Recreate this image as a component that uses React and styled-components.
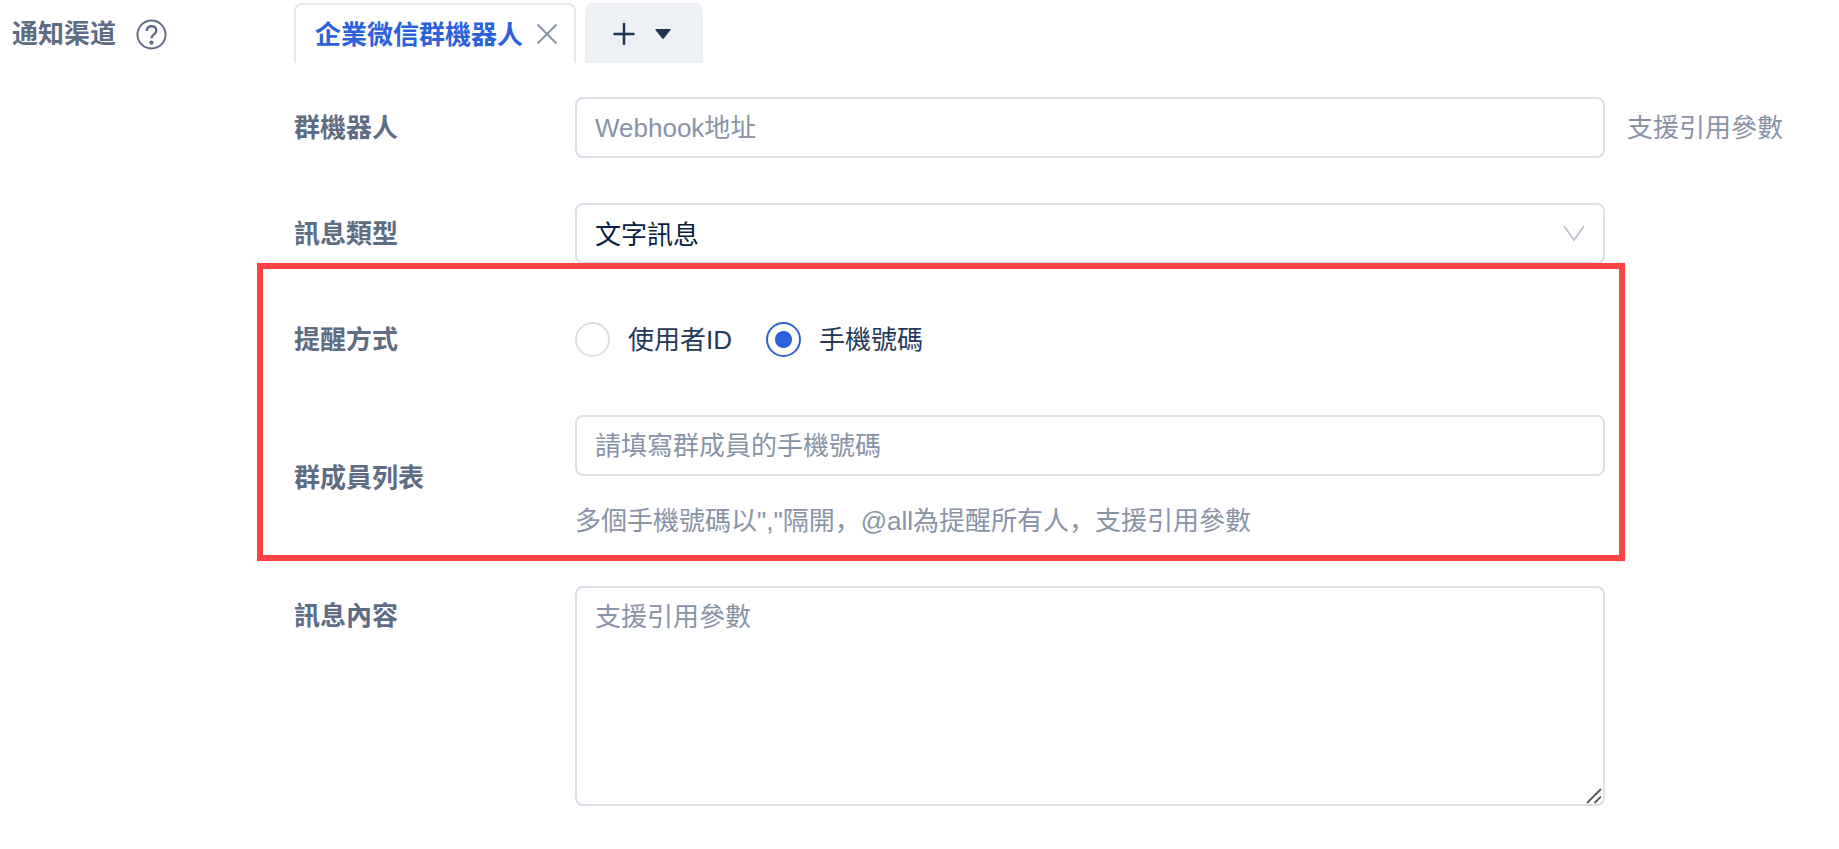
import React, { useState } from "react";
import styled, { createGlobalStyle } from "styled-components";

const GlobalStyle = createGlobalStyle`
  * {
    box-sizing: border-box;
  }

  body {
    margin: 0;
    background: #fff;
    color: #253858;
    font-family: "Liberation Sans", "Noto Sans CJK SC", sans-serif;
    font-size: 26px;
    line-height: 40px;
  }

  button,
  input,
  select,
  textarea {
    font: inherit;
  }
`;

const Page = styled.main`
  display: grid;
  grid-template-columns: 282px minmax(0, 1fr);
  padding: 3px 0 32px 12px;
`;

const ChannelTitle = styled.div`
  display: flex;
  align-items: center;
  gap: 20px;
  height: 60px;
  padding-top: 2px;
  color: #5e6c84;
  font-weight: 700;
`;

const IconButton = styled.button`
  display: flex;
  padding: 0;
  border: 0;
  background: none;
  color: ${({ $color }) => $color};
  cursor: pointer;
`;

const TabBar = styled.div`
  display: flex;
  gap: 9px;
  height: 60px;
`;

const Tab = styled.div`
  display: flex;
  align-items: center;
  gap: 13px;
  padding: 0 16px 0 19px;
  border: 2px solid #e4e8ef;
  border-bottom: 0;
  border-radius: 8px 8px 0 0;
`;

const TabName = styled.button`
  padding: 2px 0 0;
  border: 0;
  background: none;
  color: #2b62dc;
  font-weight: 700;
  white-space: nowrap;
  cursor: pointer;
`;

const AddTab = styled.button`
  display: flex;
  align-items: center;
  gap: 20px;
  padding: 2px 32px 0 28px;
  border: 0;
  border-radius: 8px 8px 0 0;
  background: #edf0f5;
  color: #1f3454;
  cursor: pointer;
`;

const Form = styled.form`
  display: flex;
  flex-direction: column;
  gap: 45px;
  margin-top: 34px;
`;

const Row = styled.div`
  display: grid;
  grid-template-columns: 281px minmax(0, 1fr) 234px;
  align-items: ${({ $top }) => ($top ? "start" : "center")};
  min-height: 61px;
`;

const Label = styled.label`
  padding: ${({ $top }) => ($top ? "10px 0" : "0")};
  color: #5e6c84;
  font-weight: 700;
`;

const Control = styled.input`
  display: block;
  width: 100%;
  height: 61px;
  padding: 2px 18px 0;
  border: 2px solid #dadfe8;
  border-radius: 8px;
  outline: 0;
  background: #fff;
  color: #091e42;

  &::placeholder {
    color: #8993a6;
    opacity: 1;
  }

  &:focus {
    border-color: #2b62dc;
  }
`;

const SelectWrapper = styled.div`
  position: relative;

  svg {
    position: absolute;
    top: 22px;
    right: 20px;
    pointer-events: none;
  }
`;

const Select = styled(Control)`
  appearance: none;
`;

const TextAreaWrapper = styled.div`
  position: relative;

  svg {
    position: absolute;
    right: 3px;
    bottom: 2px;
    pointer-events: none;
  }
`;

const TextArea = styled(Control)`
  height: 220px;
  padding: 9px 18px;
  resize: vertical;

  &::-webkit-resizer {
    background: transparent;
  }
`;

const Hint = styled.p`
  margin: ${({ $below }) => ($below ? "25px 0 0" : "0 0 0 22px")};
  color: #8993a6;
`;

const Marked = styled.section`
  position: relative;
  display: flex;
  flex-direction: column;
  gap: 45px;

  &::after {
    content: "";
    position: absolute;
    top: -46px;
    right: 214px;
    bottom: -20px;
    left: -37px;
    border: 6px solid #ff4242;
    pointer-events: none;
  }
`;

const RadioGroup = styled.div`
  display: flex;
  gap: 34px;
`;

const RadioLabel = styled.label`
  display: flex;
  align-items: center;
  gap: 18px;
  cursor: pointer;
`;

const Radio = styled.input`
  appearance: none;
  width: 35px;
  height: 35px;
  margin: 0;
  border: 2px solid #dadfe8;
  border-radius: 50%;

  &:checked {
    border-color: #2b62dc;
    background: radial-gradient(circle, #2b62dc 8px, transparent 9px);
  }
`;

const remindTypes = [
  { id: "user", name: "使用者ID" },
  { id: "phone", name: "手機號碼" }
];

function App() {
  const [remind, setRemind] = useState("phone");

  return (
    <Page>
      <GlobalStyle />
      <ChannelTitle>
        <span>通知渠道</span>
        <IconButton type="button" aria-label="說明" $color="#5e6c84">
          <svg width="31" height="31" viewBox="0 0 32 32" fill="none" stroke="currentColor" strokeWidth="2">
            <circle cx="16" cy="16" r="14.5" />
            <path d="M11 12.500C11 9 13 7.500 16 7.500s5 1.600 5 4.500c0 3.800-5 3.800-5 7.800" strokeWidth="2.400" />
            <circle cx="16" cy="24.500" r="2.200" fill="currentColor" stroke="none" />
          </svg>
        </IconButton>
      </ChannelTitle>
      <div>
        <TabBar>
          <Tab>
            <TabName type="button">企業微信群機器人</TabName>
            <IconButton type="button" aria-label="關閉" $color="#8993a6">
              <svg width="22" height="22" viewBox="0 0 22 22" fill="none" stroke="currentColor" strokeWidth="2">
                <path d="M1.500 1.500l19 19M20.500 1.500l-19 19" />
              </svg>
            </IconButton>
          </Tab>
          <AddTab type="button" aria-label="新增">
            <svg width="22" height="22" viewBox="0 0 22 22" fill="none" stroke="currentColor" strokeWidth="2.500">
              <path d="M0.500 11h21M11 0v22" />
            </svg>
            <svg width="16" height="10" viewBox="0 0 16 10" fill="currentColor">
              <path d="M1 0h14q1 0 .5 1L9 9.300q-1 1-2 0L.500 1Q0 0 1 0z" />
            </svg>
          </AddTab>
        </TabBar>

        <Form onSubmit={e => e.preventDefault()}>
          <Row>
            <Label htmlFor="webhook">群機器人</Label>
            <Control id="webhook" placeholder="Webhook地址" />
            <Hint>支援引用參數</Hint>
          </Row>

          <Row>
            <Label htmlFor="msgType">訊息類型</Label>
            <SelectWrapper>
              <Select as="select" id="msgType" defaultValue="text">
                <option value="text">文字訊息</option>
              </Select>
              <svg width="22" height="17" viewBox="0 0 22 17" fill="none" stroke="#c1c7d0" strokeWidth="2">
                <path d="M1 1l10 14L21 1" />
              </svg>
            </SelectWrapper>
          </Row>

          <Marked>
            <Row role="radiogroup" aria-labelledby="remindLabel">
              <Label as="span" id="remindLabel">提醒方式</Label>
              <RadioGroup>
                {remindTypes.map(({ id, name }) => (
                  <RadioLabel key={id}>
                    <Radio
                      type="radio"
                      name="remind"
                      checked={remind === id}
                      onChange={() => setRemind(id)}
                    />
                    {name}
                  </RadioLabel>
                ))}
              </RadioGroup>
            </Row>

            <Row>
              <Label htmlFor="members">群成員列表</Label>
              <div>
                <Control id="members" placeholder="請填寫群成員的手機號碼" />
                <Hint $below>多個手機號碼以","隔開，@all為提醒所有人，支援引用參數</Hint>
              </div>
            </Row>
          </Marked>

          <Row $top>
            <Label $top htmlFor="content">訊息內容</Label>
            <TextAreaWrapper>
              <TextArea as="textarea" id="content" placeholder="支援引用參數" />
              <svg width="16" height="16" viewBox="0 0 16 16" fill="none" stroke="#5a5a5a" strokeWidth="1.800">
                <path d="M1 15L15 1M8.500 15L15 8.500" />
              </svg>
            </TextAreaWrapper>
          </Row>
        </Form>
      </div>
    </Page>
  );
}

export default App;
